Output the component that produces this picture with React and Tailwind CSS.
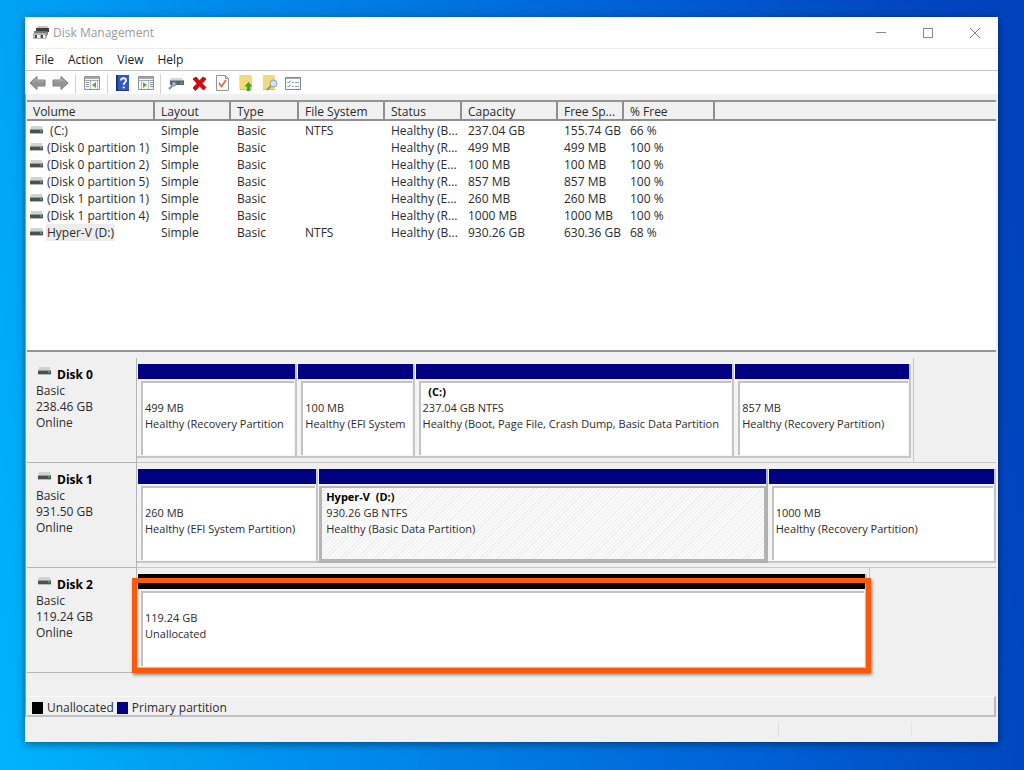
import clsx from "clsx";

const columns = [
  { name: "Volume", width: "w-[128px]" },
  { name: "Layout", width: "w-[76px]" },
  { name: "Type", width: "w-[68px]" },
  { name: "File System", width: "w-[86px]" },
  { name: "Status", width: "w-[77px]" },
  { name: "Capacity", width: "w-[96px]" },
  { name: "Free Sp...", width: "w-[66px]" },
  { name: "% Free", width: "w-[91px]" },
];

const volumes = [
  ["\u00a0(C:)", "Simple", "Basic", "NTFS", "Healthy (B...", "237.04 GB", "155.74 GB", "66 %"],
  ["(Disk 0 partition 1)", "Simple", "Basic", "", "Healthy (R...", "499 MB", "499 MB", "100 %"],
  ["(Disk 0 partition 2)", "Simple", "Basic", "", "Healthy (E...", "100 MB", "100 MB", "100 %"],
  ["(Disk 0 partition 5)", "Simple", "Basic", "", "Healthy (R...", "857 MB", "857 MB", "100 %"],
  ["(Disk 1 partition 1)", "Simple", "Basic", "", "Healthy (E...", "260 MB", "260 MB", "100 %"],
  ["(Disk 1 partition 4)", "Simple", "Basic", "", "Healthy (R...", "1000 MB", "1000 MB", "100 %"],
  ["Hyper-V (D:)", "Simple", "Basic", "NTFS", "Healthy (B...", "930.26 GB", "630.36 GB", "68 %"],
];

const disks = [
  {
    name: "Disk 0",
    size: "238.46 GB",
    width: "w-[90.4%]",
    partitions: [
      { size: "499 MB", status: "Healthy (Recovery Partition", grow: "grow-157" },
      { size: "100 MB", status: "Healthy (EFI System", grow: "grow-114" },
      {
        name: "\u00a0\u00a0(C:)",
        size: "237.04 GB NTFS",
        status: "Healthy (Boot, Page File, Crash Dump, Basic Data Partition",
        grow: "grow-316",
      },
      { size: "857 MB", status: "Healthy (Recovery Partition)", grow: "grow-173" },
    ],
  },
  {
    name: "Disk 1",
    size: "931.50 GB",
    width: "w-full",
    partitions: [
      { size: "260 MB", status: "Healthy (EFI System Partition)", grow: "grow-178" },
      {
        name: "Hyper-V\u00a0 (D:)",
        size: "930.26 GB NTFS",
        status: "Healthy (Basic Data Partition)",
        grow: "grow-446",
        selected: true,
      },
      { size: "1000 MB", status: "Healthy (Recovery Partition)", grow: "grow-225" },
    ],
  },
  {
    name: "Disk 2",
    size: "119.24 GB",
    width: "w-[85.3%]",
    highlighted: true,
    partitions: [
      { size: "119.24 GB", status: "Unallocated", grow: "grow", unallocated: true },
    ],
  },
];

function DriveIcon() {
  return (
    <svg width="13" height="9" viewBox="0 0 13 9" className="shrink-0" aria-hidden="true">
      <path d="M1 0h11l1 4H0z" fill="#d0d3d2" />
      <path d="M0 4h13v3H0z" fill="#4b5150" />
      <path d="M0 3h13v1H0z" fill="#979c9b" />
      <path d="M0 7h13v1H0z" fill="#b5bab9" />
      <path d="M10 4h2v2h-2z" fill="#4d9665" />
    </svg>
  );
}

function AppIcon() {
  return (
    <svg width="16" height="16" viewBox="0 0 16 16" aria-hidden="true">
      <path d="M5 1h9l2 3H3z" fill="#c4c4c4" />
      <path d="M3 3h13v4H3z" fill="#3d3d3d" />
      <path d="M1 6h12v3H1z" fill="#777" />
      <path d="M0 8h13v6H0z" fill="#b4b4b4" />
      <path d="M2 10h2v3H2zM8 10h2v3H8z" fill="#4b4b4b" />
      <path d="M4 10h3v3H4zM10 10h2v3h-2z" fill="#efefef" />
      <path d="M13 7l2-1v3l-2 4z" fill="#858585" />
    </svg>
  );
}

function ArrowIcon({ flip }) {
  return (
    <svg
      width="17"
      height="16"
      viewBox="0 0 17 16"
      className={clsx(flip && "-scale-x-100")}
      aria-hidden="true"
    >
      <path
        d="M1 8l7-6.500V5h8v6H8v3.500z"
        fill="#939393"
        stroke="#7f7f7f"
        strokeLinejoin="round"
      />
      <path d="M3.500 7.500L7.500 4v2H15" fill="none" stroke="#b0b0b0" />
    </svg>
  );
}

function TreePaneIcon() {
  return (
    <svg width="16" height="14" viewBox="0 0 16 14" aria-hidden="true">
      <path d="M.5.5h15v13H.5z" fill="#f6f6f6" stroke="#8e9296" />
      <path d="M1 1h14v2H1z" fill="#a4a9ae" />
      <path d="M1 4.500h14" stroke="#a4a9ae" />
      <path d="M6.500 5v8M13.500 5v8" stroke="#b9bdc1" />
      <path d="M2 6.500h3M2 8.500h3M2 10.500h3" stroke="#8b9299" />
      <path d="M12 6v6L8 9z" fill="#55ab45" />
    </svg>
  );
}

function ActionPaneIcon() {
  return (
    <svg width="16" height="14" viewBox="0 0 16 14" aria-hidden="true">
      <path d="M.5.5h15v13H.5z" fill="#f6f6f6" stroke="#8e9296" />
      <path d="M1 1h14v2H1z" fill="#a4a9ae" />
      <path d="M1 4.500h14" stroke="#a4a9ae" />
      <path d="M3.500 5v8M10.500 5v8" stroke="#b9bdc1" />
      <path d="M12 6.500h3M12 8.500h3M12 10.500h3" stroke="#8b9299" />
      <path d="M5 6v6l4-3z" fill="#55ab45" />
    </svg>
  );
}

function HelpIcon() {
  return (
    <svg width="13" height="16" viewBox="0 0 13 16" aria-hidden="true">
      <path d="M0 0h13v16H0z" fill="#3159bd" />
      <path d="M0 0h2v16H0z" fill="#153489" />
      <path d="M2 15h11v1H2z" fill="#183b91" />
      <path
        d="M5 5.500c0-3 5-3 5 0 0 2-2.300 2-2.300 4.500"
        fill="none"
        stroke="#fff"
        strokeWidth="1.800"
      />
      <circle cx="7.700" cy="12.500" r="1.100" fill="#fff" />
    </svg>
  );
}

function RescanIcon() {
  return (
    <svg width="16" height="14" viewBox="0 0 16 14" aria-hidden="true">
      <path d="M3 2h11l2 3H1z" fill="#d3d7d9" />
      <path d="M2 5h14v4H2z" fill="#59636a" />
      <path d="M2 4h14v1H2z" fill="#9ba2a7" />
      <path d="M12 6h3v2h-3z" fill="#45a055" />
      <path d="M1 13l4-4" stroke="#7e8fa0" strokeWidth="2" />
      <circle cx="6" cy="8" r="2" fill="#a9c6de" stroke="#778b9c" />
    </svg>
  );
}

function DeleteIcon() {
  return (
    <svg width="15" height="15" viewBox="0 0 15 15" aria-hidden="true">
      <path
        d="M1 3l3-2 3.500 4L11 1l3 2-4 4.500 4 4-2.500 2.500-4-4-4 4.500L1 12l4-4.500z"
        fill="#cf0a0a"
        stroke="#cf0a0a"
      />
    </svg>
  );
}

function PropertiesIcon() {
  return (
    <svg width="13" height="16" viewBox="0 0 13 16" aria-hidden="true">
      <path d="M.5.5h9l3 3v12H.5z" fill="#fafafa" stroke="#90959a" />
      <path d="M9.500.5v3h3" fill="none" stroke="#90959a" />
      <path d="M3 8l2.500 3.500L10 5" fill="none" stroke="#e06a38" strokeWidth="1.700" />
    </svg>
  );
}

function FolderUpIcon() {
  return (
    <svg width="14" height="16" viewBox="0 0 14 16" aria-hidden="true">
      <path d="M0 0h12l1 2v13H0z" fill="#f3d978" />
      <path d="M0 14h13v1H0z" fill="#dfbd55" />
      <path d="M0 0h1v15H0z" fill="#f9e8a5" />
      <path d="M9.500 7l4 4.500h-2.300V16H7.800v-4.500H5.500z" fill="#39a52c" />
    </svg>
  );
}

function FolderSearchIcon() {
  return (
    <svg width="16" height="16" viewBox="0 0 16 16" aria-hidden="true">
      <path d="M1 0h11l1 2v13H1z" fill="#f3d978" />
      <path d="M1 14h12v1H1z" fill="#dfbd55" />
      <path d="M5 15l4-4" stroke="#8c9098" strokeWidth="2" />
      <circle cx="11.500" cy="8.500" r="3.500" fill="#cfe3f2" stroke="#8b9cad" />
    </svg>
  );
}

function ListIcon() {
  return (
    <svg width="16" height="13" viewBox="0 0 16 13" aria-hidden="true">
      <path d="M.5.5h15v12H.5z" fill="#f8f8f8" stroke="#7f8489" />
      <path d="M1 1.500h14" stroke="#a9aeb2" />
      <path d="M2.500 5l1 1L5.500 3.800M2.500 9l1 1 2-2.200" fill="none" stroke="#5681b3" />
      <path d="M7 5.500h2M10 5.500h4M7 9.500h2M10 9.500h4" stroke="#9aa0a5" />
    </svg>
  );
}

function ToolButton({ label, className, children }) {
  return (
    <button
      type="button"
      aria-label={label}
      className={clsx("flex h-[22px] shrink-0 items-center justify-center", className)}
    >
      {children}
    </button>
  );
}

function Separator() {
  return <div className="mx-[3px] h-[20px] w-px shrink-0 bg-[#d4d4d4]" />;
}

function TitleBar() {
  return (
    <header className="flex h-[32px] items-center border-b border-[#ededed] pl-2">
      <AppIcon />
      <h1 className="ml-1 text-[12px] text-[#9b9b9b]">Disk Management</h1>
      <div className="ml-auto flex h-full text-[#858585]">
        <button type="button" aria-label="Minimize" className="flex w-[47px] items-center justify-center">
          <svg width="10" height="10" viewBox="0 0 10 10">
            <path d="M0 4.500h10" stroke="currentColor" />
          </svg>
        </button>
        <button type="button" aria-label="Maximize" className="flex w-[47px] items-center justify-center">
          <svg width="10" height="10" viewBox="0 0 10 10">
            <path d="M.5.5h9v9h-9z" fill="none" stroke="currentColor" />
          </svg>
        </button>
        <button type="button" aria-label="Close" className="flex w-[47px] items-center justify-center">
          <svg width="10" height="10" viewBox="0 0 10 10">
            <path d="M0 0l10 10M10 0L0 10" stroke="currentColor" />
          </svg>
        </button>
      </div>
    </header>
  );
}

function MenuBar() {
  return (
    <nav className="flex h-[22px] items-center gap-[14px] border-b border-[#c4c4c4] pl-[10px] text-[12px] text-[#1c1c1c]">
      <button type="button">File</button>
      <button type="button">Action</button>
      <button type="button">View</button>
      <button type="button">Help</button>
    </nav>
  );
}

function Toolbar() {
  return (
    <div className="flex h-[23px] items-end pl-px">
      <ToolButton label="Back" className="w-[23px]">
        <ArrowIcon />
      </ToolButton>
      <ToolButton label="Forward" className="w-[23px]">
        <ArrowIcon flip />
      </ToolButton>
      <Separator />
      <ToolButton label="Show/Hide Console Tree" className="w-[25px]">
        <TreePaneIcon />
      </ToolButton>
      <Separator />
      <ToolButton label="Help" className="w-[23px]">
        <HelpIcon />
      </ToolButton>
      <ToolButton label="Show/Hide Action Pane" className="w-[23px]">
        <ActionPaneIcon />
      </ToolButton>
      <Separator />
      <ToolButton label="Rescan Disks" className="w-[24px]">
        <RescanIcon />
      </ToolButton>
      <ToolButton label="Delete" className="w-[23px]">
        <DeleteIcon />
      </ToolButton>
      <ToolButton label="Properties" className="w-[23px]">
        <PropertiesIcon />
      </ToolButton>
      <ToolButton label="Open" className="w-[24px]">
        <FolderUpIcon />
      </ToolButton>
      <ToolButton label="Explore" className="w-[23px]">
        <FolderSearchIcon />
      </ToolButton>
      <ToolButton label="Settings" className="w-[23px]">
        <ListIcon />
      </ToolButton>
    </div>
  );
}

function VolumeTable() {
  return (
    <div className="min-h-[252px] border-y-2 border-[#949494] bg-white text-[12px] text-[#2b2b2b]">
      <table className="w-full table-fixed border-separate border-spacing-0 text-left">
        <thead>
          <tr className="bg-[#f0f0f0]">
            {columns.map((column) => (
              <th
                key={column.name}
                className={clsx(
                  "h-[19px] border-r-2 border-b-2 border-[#8f8f8f] p-0 pt-[3px] pl-[6px] leading-[14px] font-normal whitespace-nowrap",
                  column.width
                )}
              >
                {column.name}
              </th>
            ))}
            <th className="border-b-2 border-[#8f8f8f] p-0" />
          </tr>
        </thead>
        <tbody className="before:block before:h-px before:content-['']">
          {volumes.map(([name, ...cells], index) => (
            <tr key={name}>
              <td className="p-0 pl-[3px] leading-[17px] whitespace-nowrap">
                <div className="flex items-center gap-[3px]">
                  <DriveIcon />
                  <span className={clsx("px-px", index === 6 && "bg-[#ececec]")}>{name}</span>
                </div>
              </td>
              {cells.map((cell, i) => (
                <td key={i} className="p-0 pl-[6px] leading-[17px] whitespace-nowrap">
                  {cell}
                </td>
              ))}
              <td className="p-0" />
            </tr>
          ))}
        </tbody>
      </table>
    </div>
  );
}

function Partition({ partition }) {
  const { name, size, status, grow, selected, unallocated } = partition;
  return (
    <div
      className={clsx(
        "flex min-w-0 basis-0 flex-col border-r-2 border-b-2 bg-[#f4f4f4] pl-px",
        selected ? "border-[#b0b0b0]" : "border-[#c6c6c6]",
        grow
      )}
    >
      <div className={clsx("h-[15px] shrink-0", unallocated ? "bg-black" : "bg-[#000080]")} />
      <div
        className={clsx(
          "mt-[2px] min-h-0 flex-1 overflow-hidden border-t-2 text-[11px] leading-[16px] whitespace-nowrap text-[#2b2b2b]",
          selected
            ? "border-r-2 border-b-2 border-l-3 border-[#b4b4b4] bg-[repeating-linear-gradient(135deg,#fafafa_0px,#fafafa_2px,#eeeeee_2px,#eeeeee_3px)] pt-px pl-1"
            : "mr-px mb-px ml-[3px] border-l-2 border-[#c2c2c2] bg-white pt-px pl-[2px]"
        )}
      >
        <p className="h-[16px] font-bold text-black">
          <span className={clsx(selected && "bg-[#fafafa]")}>{name}</span>
        </p>
        <p className="h-[16px]">
          <span className={clsx(selected && "bg-[#fafafa]")}>{size}</span>
        </p>
        <p className="h-[16px]">
          <span className={clsx(selected && "bg-[#fafafa]")}>{status}</span>
        </p>
      </div>
    </div>
  );
}

function DiskRow({ disk }) {
  return (
    <section className="flex h-[105px]">
      <div className="w-[110px] shrink-0 border-r border-b border-[#b4b4b4] pt-[9px] pl-[9px] text-[12px] leading-[16px] text-[#2b2b2b]">
        <h2 className="flex gap-[6px] pl-[2px] font-bold text-black">
          <DriveIcon />
          {disk.name}
        </h2>
        <p>Basic</p>
        <p>{disk.size}</p>
        <p>Online</p>
      </div>
      <div className={clsx("min-w-0 flex-1", !disk.highlighted && "border-b border-[#c6c6c6]")}>
        <div
          className={clsx(
            "relative flex h-full pt-[6px] pb-[4px]",
            disk.width,
            disk.width !== "w-full" && "border-r border-[#c6c6c6] pr-[2px]"
          )}
        >
          {disk.partitions.map((partition) => (
            <Partition key={partition.size} partition={partition} />
          ))}
          {disk.highlighted && (
            <div className="absolute top-[10px] -right-[2px] bottom-0 -left-[5px] border-[5px] border-[#f95b0c] shadow-[1px_2px_3px_rgba(0,0,0,0.45),inset_1px_2px_3px_rgba(0,0,0,0.25)]" />
          )}
        </div>
      </div>
    </section>
  );
}

function Legend() {
  return (
    <div className="flex h-[21px] items-center border-t border-r-2 border-b-2 border-t-[#fafafa] border-r-[#b9b9b9] border-b-[#c0c0c0] pt-[3px] pl-[5px] text-[12px] leading-[15px] text-[#2b2b2b]">
      <span className="h-[12px] w-[11px] bg-black" />
      <span className="ml-[4px]">Unallocated</span>
      <span className="ml-[3px] h-[12px] w-[11px] bg-[#000080]" />
      <span className="ml-[4px]">Primary partition</span>
    </div>
  );
}

export default function App() {
  return (
    <div className="flex min-h-screen bg-[linear-gradient(80deg,#00b4fd_0%,#0091ee_25%,#0067d8_60%,#0046c0_90%,#0042bb_100%)] pt-[17px] pr-[26px] pb-[28px] pl-[25px] font-['Open_Sans','Noto_Sans',sans-serif]">
      <main className="flex min-w-0 flex-1 flex-col bg-white shadow-[0_2px_8px_rgba(0,0,0,0.45)]">
        <TitleBar />
        <MenuBar />
        <Toolbar />
        <div className="flex flex-1 flex-col border-l border-[#9a9a9a] bg-[#f0f0f0] pt-[6px] pr-[2px] pl-px">
          <VolumeTable />
          <div className="flex-1 pt-[6px]">
            {disks.map((disk) => (
              <DiskRow key={disk.name} disk={disk} />
            ))}
          </div>
          <Legend />
        </div>
        <footer className="flex h-[25px] justify-end bg-[#f0f0f0] py-[5px]">
          <div className="w-[133px] border-l border-[#dedede]" />
          <div className="w-[87px] border-l border-[#e4e4e4]" />
        </footer>
      </main>
    </div>
  );
}
